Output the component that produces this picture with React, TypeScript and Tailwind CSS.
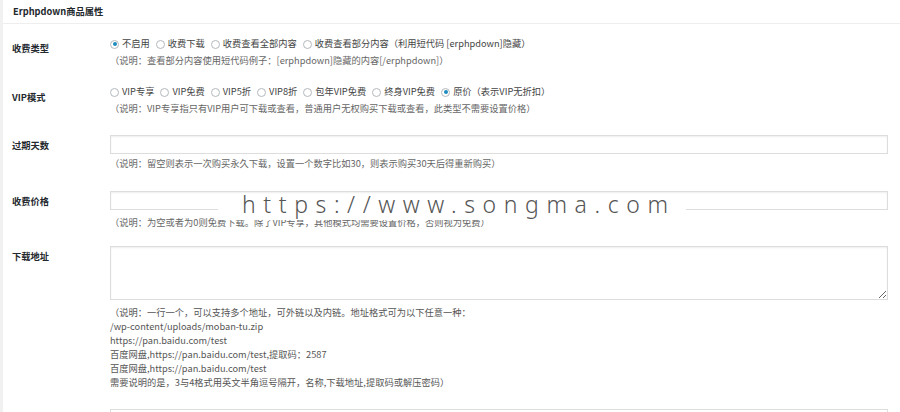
import React from "react";

const FONT = { fontFamily: '"Noto Sans CJK SC", "Noto Sans", sans-serif' };

function Radio({ label, checked }: { label: string; checked?: boolean }) {
  return (
    <label className="mr-[6px] inline-flex items-center">
      <span className="flex h-[9px] w-[9px] items-center justify-center rounded-full border border-[#b4b9be] bg-white">
        {checked && <span className="h-[4px] w-[4px] rounded-full bg-[#1e8cbe]" />}
      </span>
      <span className="ml-[3px] text-[#444]">{label}</span>
    </label>
  );
}

const feeTypes = ["不启用", "收费下载", "收费查看全部内容", "收费查看部分内容（利用短代码 [erphpdown]隐藏）"];
const vipModes = ["VIP专享", "VIP免费", "VIP5折", "VIP8折", "包年VIP免费", "终身VIP免费", "原价（表示VIP无折扣）"];

const urlHelp = [
  "（说明：一行一个，可以支持多个地址，可外链以及内链。地址格式可为以下任意一种：",
  "/wp-content/uploads/moban-tu.zip",
  "https://pan.baidu.com/test",
  "百度网盘,https://pan.baidu.com/test,提取码：2587",
  "百度网盘,https://pan.baidu.com/test",
  "需要说明的是，3与4格式用英文半角逗号隔开，名称,下载地址,提取码或解压密码）",
];

export default function App() {
  return (
    <div
      className="relative h-[412px] w-[900px] overflow-hidden border-l-[3px] border-[#f1f1f1] bg-white text-[9.25px]"
      style={FONT}
    >
      <div className="flex h-[24px] items-center border-b border-[#eeeeee] pl-[10px] font-bold text-[#23282d]">
        Erphpdown商品属性
      </div>

      <div className="pl-[9px] pr-[12px]">
        {/* 收费类型 */}
        <div className="mt-[12px] flex">
          <div className="w-[98px] pt-[4px] font-bold leading-[16px] text-[#23282d]">收费类型</div>
          <div className="flex-1">
            <div className="flex h-[16px] items-center">
              {feeTypes.map((t, i) => (
                <Radio key={t} label={t} checked={i === 0} />
              ))}
            </div>
            <p className="leading-[16px] text-[#666]">
              （说明：查看部分内容使用短代码例子：[erphpdown]隐藏的内容[/erphpdown]）
            </p>
          </div>
        </div>

        {/* VIP模式 */}
        <div className="mt-[16px] flex">
          <div className="w-[98px] pt-[5px] font-bold leading-[16px] text-[#23282d]">VIP模式</div>
          <div className="flex-1">
            <div className="flex h-[16px] items-center">
              {vipModes.map((t, i) => (
                <Radio key={t} label={t} checked={i === vipModes.length - 1} />
              ))}
            </div>
            <p className="leading-[16px] text-[#666]">
              （说明：VIP专享指只有VIP用户可下载或查看，普通用户无权购买下载或查看，此类型不需要设置价格）
            </p>
          </div>
        </div>

        {/* 过期天数 */}
        <div className="mt-[19px] flex">
          <div className="w-[98px] pt-[2px] font-bold leading-[16px] text-[#23282d]">过期天数</div>
          <div className="flex-1">
            <input className="block h-[19px] w-full border border-[#dddddd] bg-white shadow-[inset_0_1px_2px_rgba(0,0,0,0.07)] outline-none" />
            <p className="mt-[1px] leading-[16px] text-[#666]">
              （说明：留空则表示一次购买永久下载，设置一个数字比如30，则表示购买30天后得重新购买）
            </p>
          </div>
        </div>

        {/* 收费价格 */}
        <div className="mt-[20px] flex">
          <div className="w-[98px] pt-[2px] font-bold leading-[16px] text-[#23282d]">收费价格</div>
          <div className="flex-1">
            <input className="block h-[19px] w-full border border-[#dddddd] bg-white shadow-[inset_0_1px_2px_rgba(0,0,0,0.07)] outline-none" />
            <p className="mt-[4px] leading-[16px] text-[#666]">
              （说明：为空或者为0则免费下载。除了VIP专享，其他模式均需要设置价格，否则视为免费）
            </p>
          </div>
        </div>

        {/* 下载地址 */}
        <div className="mt-[16px] flex">
          <div className="w-[98px] pt-[2px] font-bold leading-[16px] text-[#23282d]">下载地址</div>
          <div className="flex-1">
            <textarea className="block h-[54px] w-full border border-[#dddddd] bg-white shadow-[inset_0_1px_2px_rgba(0,0,0,0.07)] outline-none" />
            <div className="mt-[5px] leading-[14px] text-[#555]">
              {urlHelp.map((l) => (
                <div key={l}>{l}</div>
              ))}
            </div>
            <div className="mt-[20px] h-[19px] border border-[#dddddd]" />
          </div>
        </div>
      </div>

      {/* 水印 */}
      <div className="absolute left-[215px] top-[194px] h-[26px] w-[468px] bg-white pl-[24px]">
        <span
          className="block text-[23px] font-light leading-[21px] tracking-[7.6px] text-[#555]"
          style={{ fontFamily: '"Noto Sans", sans-serif' }}
        >
          https://www.songma.com
        </span>
      </div>
    </div>
  );
}
